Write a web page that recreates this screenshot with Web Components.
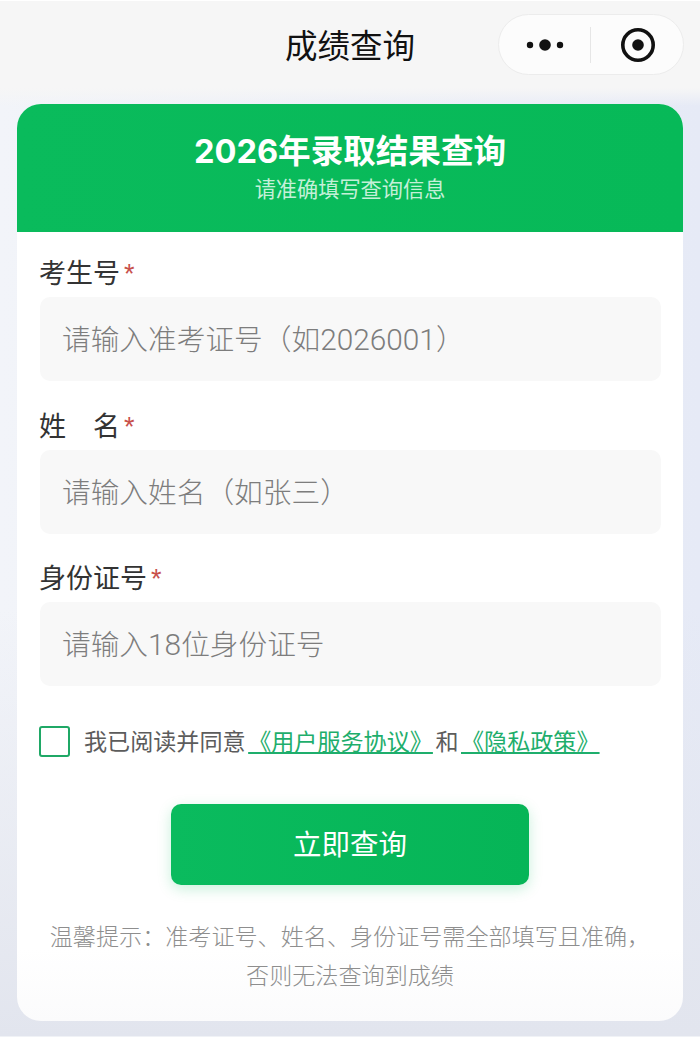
<!DOCTYPE html>
<html lang="zh">
<head>
<meta charset="utf-8">
<title>成绩查询</title>
<style>
  html, body { margin: 0; height: 1037px; overflow: hidden; }
  body {
    font-family: "Noto Sans CJK SC", "Noto Sans", sans-serif;
    background: #eef1f8;
  }
  .num { font-family: Roboto, "Liberation Sans", sans-serif; font-size: 29.8px; line-height: 1; }
</style>
</head>
<body>
<nav-bar>成绩查询</nav-bar>
<query-page>
  <query-card heading="2026年录取结果查询" sub="请准确填写查询信息">
    <form-field label="考生号">请输入准考证号（如<span class="num">2026001</span>）</form-field>
    <form-field label="姓　名">请输入姓名（如张三）</form-field>
    <form-field label="身份证号">请输入<span class="num">18</span>位身份证号</form-field>
    <agree-row></agree-row>
    <submit-button>立即查询</submit-button>
    <tip-text>温馨提示：准考证号、姓名、身份证号需全部填写且准确，<br>否则无法查询到成绩</tip-text>
  </query-card>
</query-page>

<script>
  function define(name, html) {
    customElements.define(name, class extends HTMLElement {
      constructor() {
        super();
        let root = this.attachShadow({ mode: 'open' });
        root.innerHTML = html;
        root.querySelectorAll('[data-attr]').forEach(el => {
          el.textContent = this.getAttribute(el.dataset.attr);
        });
      }
    });
  }

  define('nav-bar', `
    <style>
      :host {
        display: flex;
        justify-content: center;
        align-items: center;
        position: relative;
        height: 88px;
        padding-bottom: 2px;
        box-sizing: border-box;
        background: #f6f6f6;
        border-top: 1px solid #fff;
        color: #111;
        font-size: 32.5px;
      }
      .capsule {
        position: absolute;
        left: 498px;
        top: 13px;
        width: 186px;
        height: 61px;
        box-sizing: border-box;
        display: flex;
        align-items: center;
        background: #fcfcfc;
        border: 1px solid #ececec;
        border-radius: 31px;
      }
      .more { width: 91px; display: flex; justify-content: center; }
      .line { width: 1px; height: 36px; background: #e6e6e6; }
      .target { flex: 1; display: flex; justify-content: center; margin-left: 2px; }
    </style>
    <slot></slot>
    <div class="capsule">
      <div class="more">
        <svg width="40" height="14" viewBox="0 0 40 14">
          <circle cx="5" cy="7" r="3.2" fill="#111"/>
          <circle cx="20" cy="7" r="5.8" fill="#111"/>
          <circle cx="35" cy="7" r="3.2" fill="#111"/>
        </svg>
      </div>
      <div class="line"></div>
      <div class="target">
        <svg width="36" height="36" viewBox="0 0 36 36">
          <circle cx="18" cy="18" r="15.2" fill="none" stroke="#111" stroke-width="3.6"/>
          <circle cx="18" cy="18" r="5.8" fill="#111"/>
        </svg>
      </div>
    </div>
  `);

  define('query-page', `
    <style>
      :host {
        display: block;
        height: 949px;
        padding: 16px 17px 0;
        box-sizing: border-box;
        border-bottom: 1px solid #f0f2f6;
        background:
          linear-gradient(180deg, #f6f6f6 0, rgba(246, 246, 246, 0) 18px),
          linear-gradient(180deg, rgba(226, 229, 238, 0) 55%, #e2e5ee 100%),
          linear-gradient(90deg, #f2f4f9, #e6eaf6);
      }
    </style>
    <slot></slot>
  `);

  define('query-card', `
    <style>
      :host {
        display: block;
        height: 917px;
        background: linear-gradient(180deg, #fff 92%, #fbfbfc 100%);
        border-radius: 24px;
        overflow: hidden;
      }
      header {
        height: 128px;
        box-sizing: border-box;
        padding-top: 26px;
        text-align: center;
        color: #fff;
        background: linear-gradient(90deg, #0abb5c, #07b958);
      }
      h1 {
        margin: 0;
        font-family: Inter, "Noto Sans CJK SC", sans-serif;
        font-size: 32.6px;
        line-height: 42px;
        font-weight: 700;
      }
      p { margin: 0; font-size: 21.2px; line-height: 32px; color: #c4f0d8; }
      .body { padding: 24px 22px 0 23px; }
    </style>
    <header>
      <h1 data-attr="heading"></h1>
      <p data-attr="sub"></p>
    </header>
    <div class="body"><slot></slot></div>
  `);

  define('form-field', `
    <style>
      :host { display: block; margin-bottom: 27.5px; }
      label {
        display: block;
        height: 32px;
        font-size: 27px;
        line-height: 32px;
        color: #333;
        margin: 0 0 9px -1px;
      }
      label i {
        font-family: "Liberation Sans", sans-serif;
        font-size: 27px;
        line-height: 0;
        margin-left: 4px;
        color: #c8504a;
        font-style: normal;
      }
      .input {
        height: 84px;
        box-sizing: border-box;
        padding: 0 0 3px 22px;
        display: flex;
        align-items: center;
        background: #f8f8f8;
        border-radius: 10px;
        font-size: 28.7px;
        font-weight: 300;
        color: #7d7d7d;
      }
      .input div { white-space: pre; }
    </style>
    <label><span data-attr="label"></span><i>*</i></label>
    <div class="input"><div><slot></slot></div></div>
  `);

  define('agree-row', `
    <style>
      :host {
        display: flex;
        align-items: center;
        margin: 38px 0 0 -1px;
        font-size: 23.1px;
        line-height: 32px;
        color: #5c5c5c;
      }
      .box {
        width: 31px;
        height: 31px;
        box-sizing: border-box;
        border: 2.5px solid #1fa866;
        border-radius: 3px;
        margin-right: 14px;
      }
      span { padding-bottom: 2px; }
      a {
        margin: 0 2.5px;
        color: #1eae6c;
        text-decoration: underline;
        text-underline-offset: 2px;
      }
    </style>
    <div class="box"></div>
    <span>我已阅读并同意<a>《用户服务协议》</a>和<a>《隐私政策》</a></span>
  `);

  define('submit-button', `
    <style>
      :host {
        display: flex;
        justify-content: center;
        align-items: center;
        width: 358px;
        height: 81px;
        margin: 46px 0 0 131px;
        padding-bottom: 4px;
        box-sizing: border-box;
        color: #fff;
        font-size: 28.5px;
        background: linear-gradient(90deg, #0abb5e, #06b557);
        border-radius: 10px;
        box-shadow: 0 4px 14px rgba(7, 185, 90, 0.22);
      }
    </style>
    <slot></slot>
  `);

  define('tip-text', `
    <style>
      :host {
        display: block;
        margin-top: 31px;
        margin-left: -1px;
        text-align: center;
        font-size: 23.1px;
        font-weight: 300;
        line-height: 39px;
        color: #8e8e8e;
      }
    </style>
    <slot></slot>
  `);
</script>
</body>
</html>
